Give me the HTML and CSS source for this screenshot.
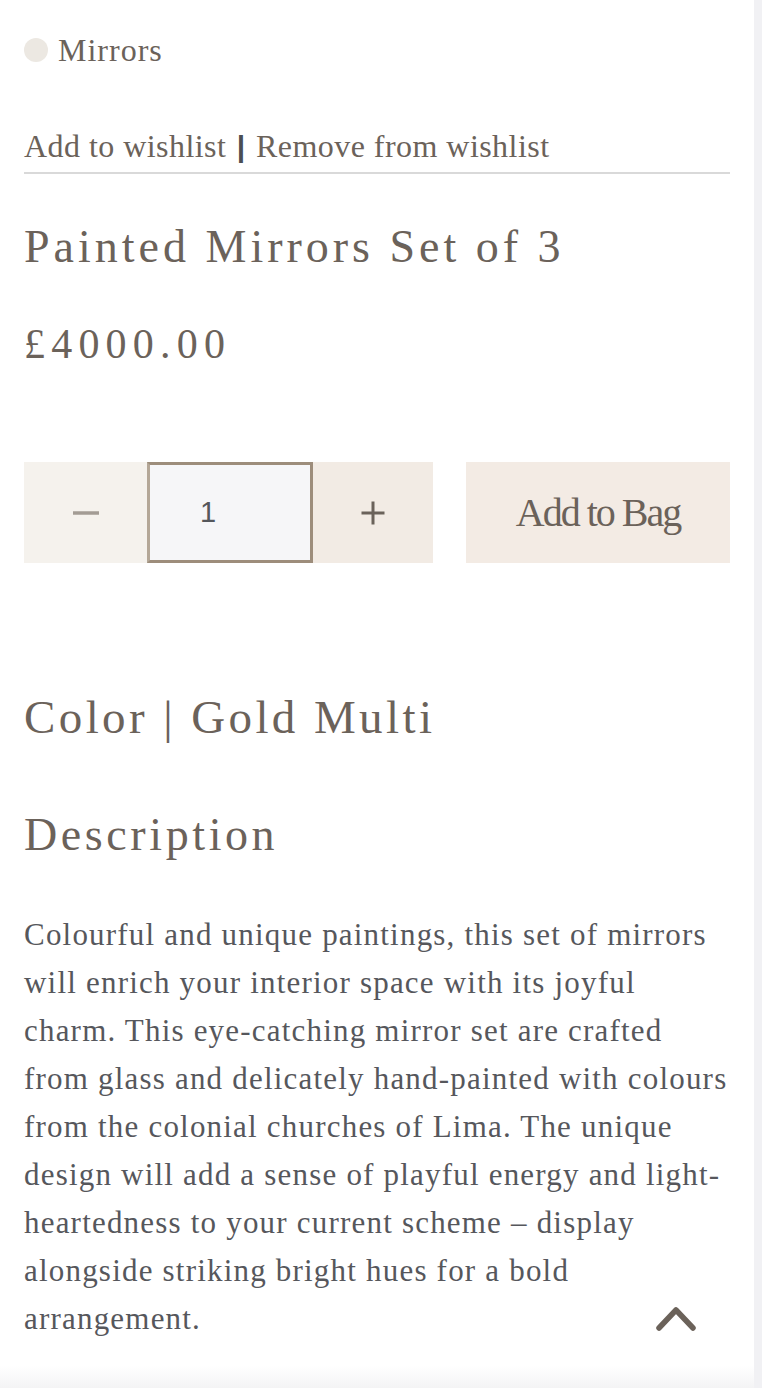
FILE: index.html
```html
<!DOCTYPE html>
<html lang="en">
<head>
<meta charset="utf-8">
<title>Painted Mirrors Set of 3</title>
<link rel="stylesheet" href="styles.css">
</head>
<body>
<div class="page">
  <main class="main">
    <div class="content">
      <div class="category">
        <span class="dot"></span>
        <span class="category-name">Mirrors</span>
      </div>
      <div class="wishlist">
        <a class="wl-link" href="#">Add to wishlist</a>
        <span class="wl-sep">|</span>
        <a class="wl-link" href="#">Remove from wishlist</a>
      </div>
      <h1 class="title">Painted Mirrors Set of 3</h1>
      <p class="price">£4000.00</p>
      <div class="buy-row">
        <div class="qty">
          <button class="qty-btn minus" type="button" aria-label="Decrease">
            <svg width="28" height="4" viewBox="0 0 28 4"><line x1="1" y1="2" x2="27" y2="2" stroke="#a39c94" stroke-width="3.5"/></svg>
          </button>
          <input class="qty-input" type="text" value="1">
          <button class="qty-btn plus" type="button" aria-label="Increase">
            <svg width="24" height="24" viewBox="0 0 24 24"><line x1="0.5" y1="12" x2="23.5" y2="12" stroke="#6b625a" stroke-width="3"/><line x1="12" y1="0.5" x2="12" y2="23.5" stroke="#6b625a" stroke-width="3"/></svg>
          </button>
        </div>
        <button class="add-bag" type="button">Add to Bag</button>
      </div>
      <h2 class="color">Color | Gold Multi</h2>
      <h2 class="desc-title">Description</h2>
      <p class="desc">Colourful and unique paintings, this set of mirrors<br>will enrich your interior space with its joyful<br>charm. This eye-catching mirror set are crafted<br>from glass and delicately hand-painted with colours<br>from the colonial churches of Lima. The unique<br>design will add a sense of playful energy and light-<br>heartedness to your current scheme – display<br>alongside striking bright hues for a bold<br>arrangement.</p>
    </div>
    <div class="bottom-band"></div>
    <a class="to-top" href="#" aria-label="Back to top">
      <svg width="42" height="28" viewBox="0 0 42 28"><polyline points="4,24 21,6 38,24" fill="none" stroke="#6b625a" stroke-width="5.5" stroke-linecap="round" stroke-linejoin="round"/></svg>
    </a>
  </main>
  <div class="scrollbar"></div>
</div>
</body>
</html>
```

FILE: styles.css
```css
* { box-sizing: border-box; }
html, body { margin: 0; padding: 0; background: #fff; }
body { font-family: "Liberation Serif", "DejaVu Serif", serif; color: #6b625a; }

.page { display: flex; width: 762px; height: 1388px; overflow: hidden; }
.main { position: relative; flex: 1; display: flex; flex-direction: column; }
.content { padding: 26px 24px 0 24px; }
.scrollbar { width: 8px; background: #f1f1f4; }

.category { display: flex; align-items: center; gap: 10px; height: 48px; }
.dot { width: 24px; height: 24px; border-radius: 50%; background: #ece8e2; }
.category-name { font-size: 32px; line-height: 48px; letter-spacing: 1px; }

.wishlist { margin-top: 52px; padding-bottom: 5px; border-bottom: 2px solid #d9d9d9; font-size: 32px; line-height: 40px; letter-spacing: 0.45px; white-space: nowrap; }
.wl-link { color: #6b625a; text-decoration: none; }
.wl-sep { color: #4b4e53; font-family: "Liberation Sans", sans-serif; font-weight: bold; font-size: 30px; margin: 0 2px; }

.title { margin: 45px 0 0; font-weight: normal; font-size: 46px; line-height: 56px; letter-spacing: 4px; }
.price { margin: 44px 0 0; font-size: 42px; line-height: 50px; letter-spacing: 6.2px; }

.buy-row { margin-top: 93px; display: flex; gap: 33px; height: 101px; }
.qty { display: flex; width: 409px; }
.qty-btn { border: 0; padding: 0; margin: 0; display: flex; align-items: center; justify-content: center; cursor: pointer; }
.minus { width: 123px; background: #f5f2ed; }
.plus { width: 120px; background: #f2ebe4; }
.qty-input { width: 166px; height: 101px; margin: 0; border: 3px solid #9d8d7b; border-left-color: #b4a797; background: #f6f6f8; font-family: "Liberation Sans", "DejaVu Sans", sans-serif; font-size: 29px; color: #55575c; padding: 0 0 0 50px; outline: none; }
.add-bag { flex: 1; border: 0; background: #f3ebe4; font-family: "Liberation Serif", serif; font-size: 40px; color: #6b625a; letter-spacing: -2px; padding: 0; cursor: pointer; }

.color { margin: 126px 0 0; font-weight: normal; font-size: 47px; line-height: 56px; letter-spacing: 3.4px; }
.desc-title { margin: 62px 0 0; font-weight: normal; font-size: 46px; line-height: 56px; letter-spacing: 3.6px; }
.desc { margin: 48px 0 0; font-size: 31px; line-height: 48px; letter-spacing: 1.2px; color: #56575c; white-space: nowrap; }

.bottom-band { margin-top: auto; height: 22px; background: linear-gradient(#ffffff, #f4f4f5); }
.to-top { position: absolute; left: 655px; top: 1304px; display: block; width: 42px; height: 28px; }
.to-top svg { display: block; }
```
